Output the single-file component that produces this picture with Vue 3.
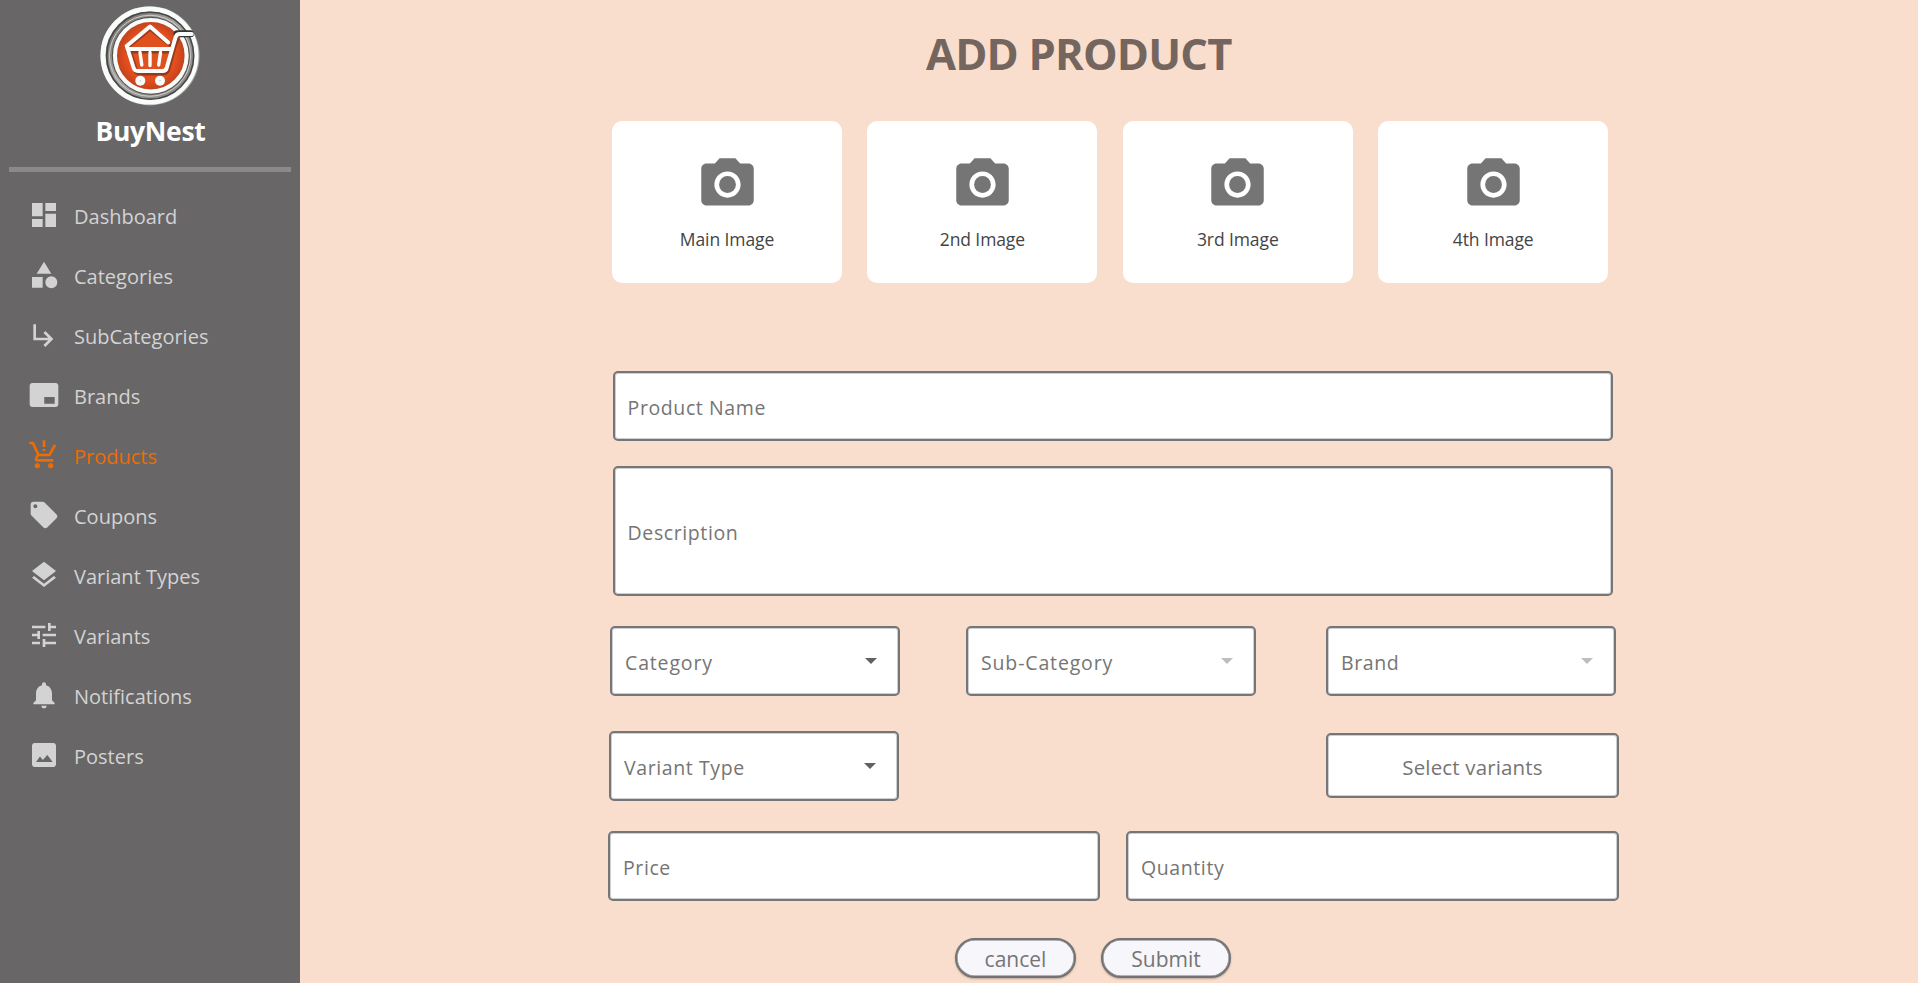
<script setup>
const nav = [
  { label: 'Dashboard', d: 'M3 13h8V3H3v10zm0 8h8v-6H3v6zm10 0h8V11h-8v10zm0-18v6h8V3h-8z' },
  { label: 'Categories', d: 'M12 2l-5.5 9h11zM17.5 13a4.5 4.5 0 1 0 0 9 4.5 4.5 0 1 0 0-9zM3 13.5h8v8H3z' },
  { label: 'SubCategories', d: 'M19 15l-6 6-1.42-1.42L15.17 16H4V4h2v10h9.17l-3.59-3.58L13 9l6 6z' },
  { label: 'Brands', d: 'M20.8 3H3.2C2.1 3 1.25 3.9 1.25 5v14c0 1.1 .9 2 1.95 2h17.6c1.05 0 1.95-.9 1.95-2V5c0-1.1-.9-2-1.95-2z M12.2 13.5h7.8v5h-7.8z' },
  { label: 'Products', active: true, d: 'M11 9h2V7.5h-2V9zm0-3h2V1h-2v5zM7 18c-1.1 0-1.99.9-1.99 2S5.9 22 7 22s2-.9 2-2-.9-2-2-2zm10 0c-1.1 0-1.99.9-1.99 2s.89 2 1.99 2 2-.9 2-2-.9-2-2-2zm-9.83-3.25l.03-.12.9-1.63h7.45c.75 0 1.41-.41 1.75-1.03l3.86-7.01L19.42 4h-.01l-1.1 2-2.76 5H8.53l-.13-.27L6.16 6l-.95-2-.94-2H1v2h2l3.6 7.59-1.35 2.45c-.16.28-.25.61-.25.96 0 1.1.9 2 2 2h12v-2H7.42c-.13 0-.25-.11-.25-.25z' },
  { label: 'Coupons', d: 'M21.41 11.58l-9-9C12.05 2.22 11.55 2 11 2H4c-1.1 0-2 .9-2 2v7c0 .55.22 1.05.59 1.42l9 9c.36.36.86.58 1.41.58s1.05-.22 1.41-.59l7-7c.37-.36.59-.86.59-1.41s-.23-1.06-.59-1.42zM5.5 7C4.67 7 4 6.33 4 5.5S4.67 4 5.5 4 7 4.67 7 5.5 6.33 7 5.5 7z' },
  { label: 'Variant Types', d: 'M11.99 18.54l-7.37-5.73L3 14.07l9 7 9-7-1.63-1.27-7.38 5.74zM12 16l7.36-5.73L21 9l-9-7-9 7 1.63 1.27L12 16z' },
  { label: 'Variants', d: 'M3 17v2h6v-2H3zM3 5v2h10V5H3zm10 16v-2h8v-2h-8v-2h-2v6h2zM7 9v2H3v2h4v2h2V9H7zm14 4v-2H11v2h10zm-6-4h2V7h4V5h-4V3h-2v6z' },
  { label: 'Notifications', d: 'M12 22c1.1 0 2-.9 2-2h-4c0 1.1.89 2 2 2zm6-6v-5c0-3.07-1.64-5.64-4.5-6.32V4c0-.83-.67-1.5-1.5-1.5s-1.5.67-1.5 1.5v.68C7.63 5.36 6 7.92 6 11v5l-2 2v1h16v-1l-2-2z' },
  { label: 'Posters', d: 'M21 19V5c0-1.1-.9-2-2-2H5c-1.1 0-2 .9-2 2v14c0 1.1.9 2 2 2h14c1.1 0 2-.9 2-2z M9 13.2l2.1 2.5L14.5 12l4 5.3H6z' },
]
const images = ['Main Image', '2nd Image', '3rd Image', '4th Image']
</script>

<template>
  <div class="page">
    <aside class="sidebar">
      <svg class="logo" viewBox="0 0 102 102">
        <defs>
          <radialGradient id="core"><stop offset="0" stop-color="#d9551f" /><stop offset=".7" stop-color="#e54d1d" /><stop offset="1" stop-color="#b9421c" /></radialGradient>
          <linearGradient id="ring" x2="1" y2="1"><stop offset="0" stop-color="#625f5c" /><stop offset=".45" stop-color="#a5a29f" /><stop offset="1" stop-color="#807d7a" /></linearGradient>
        </defs>
        <circle cx="51" cy="50.8" r="49.6" fill="#a6a5a6" />
        <circle cx="50.500" cy="50.500" r="46.500" fill="url(#ring)" stroke="#fafcfb" stroke-width="5" />
        <circle cx="51.200" cy="50.800" r="43.500" fill="none" stroke="#454744" stroke-width="1.600" />
        <circle cx="51" cy="50.800" r="40.500" fill="none" stroke="#cfcecc" stroke-width="1" />
        <circle cx="51.800" cy="50.800" r="38.500" fill="none" stroke="#504f4b" stroke-width="1" />
        <circle cx="51.800" cy="50.700" r="35.800" fill="url(#core)" stroke="#f8fbfa" stroke-width="4" />
        <g fill="none" stroke-linecap="round" stroke-linejoin="round">
          <path d="M78 28.800h13.500" stroke="#35332f" stroke-width="7" />
          <path d="M28 42L51 23l20 16M29 46h44M29 42l7 22q1 4 5 4h23q4 0 5-4l6-22 4-11" stroke="#6b2f1c" stroke-width="5" opacity=".65" />
          <path d="M27.700 41L51 21.500 69.300 37.500M29 44h43.500M27.700 41l7 22q1 3 4 3h25q3 0 4-3l6-21 3-10q1-3 4-3h12" stroke="#fbfdfc" stroke-width="4" />
          <path d="M41 47.500l1.800 12.500M51 47.500v13M61.500 47.500l-1.800 12.500" stroke="#fbfdfc" stroke-width="3.400" />
        </g>
        <circle cx="41.300" cy="75.700" r="5" fill="#fafcfb" /><circle cx="61" cy="75.700" r="5" fill="#fafcfb" />
        <circle cx="41.300" cy="75.700" r=".7" fill="#b9c5c8" /><circle cx="61" cy="75.700" r=".7" fill="#b9c5c8" />
      </svg>
      <div class="brand">BuyNest</div>
      <div class="rule"></div>
      <nav>
        <a v-for="n in nav" :key="n.label" :class="['item', { active: n.active }]">
          <svg viewBox="0 0 24 24"><path :d="n.d" fill-rule="evenodd" /></svg>
          <span>{{ n.label }}</span>
        </a>
      </nav>
    </aside>

    <main class="content">
      <h1>ADD PRODUCT</h1>
      <section class="cards">
        <div v-for="i in images" :key="i" class="card">
          <svg viewBox="0 0 24 24"><circle cx="12" cy="12" r="3.2" /><path d="M9 2L7.17 4H4c-1.1 0-2 .9-2 2v12c0 1.1.9 2 2 2h16c1.1 0 2-.9 2-2V6c0-1.1-.9-2-2-2h-3.17L15 2H9zm3 15c-2.76 0-5-2.24-5-5s2.24-5 5-5 5 2.24 5 5-2.24 5-5 5z" /></svg>
          <span>{{ i }}</span>
        </div>
      </section>

      <div class="field name"><span>Product Name</span></div>
      <div class="field description"><span>Description</span></div>
      <div class="row selects">
        <div class="field select"><span class="wide">Category</span><i class="arrow"></i></div>
        <div class="field select"><span class="wide">Sub-Category</span><i class="arrow off"></i></div>
        <div class="field select"><span>Brand</span><i class="arrow off"></i></div>
      </div>
      <div class="row variants">
        <div class="field select"><span>Variant Type</span><i class="arrow"></i></div>
        <div class="field pick"><span>Select variants</span></div>
      </div>
      <div class="row amounts">
        <div class="field"><span>Price</span></div>
        <div class="field"><span>Quantity</span></div>
      </div>
      <div class="row actions">
        <button class="cancel">cancel</button>
        <button class="submit">Submit</button>
      </div>
    </main>
  </div>
</template>

<style>
body { overflow: hidden; }
</style>

<style scoped>
* { box-sizing: border-box; }
.page { display: flex; width: 1918px; height: 983px; background: #f9decd; font-family: "Open Sans", "Noto Sans", sans-serif; overflow: hidden; }
.sidebar { width: 300px; flex: none; background: #686667; display: flex; flex-direction: column; align-items: center; }
.logo { width: 102px; height: 102px; margin-top: 5px; flex: none; }
.brand { margin-top: 6px; height: 36px; line-height: 36px; font-size: 26.5px; font-weight: 700; color: #fff; letter-spacing: -.3px; padding-left: 1px; }
.rule { width: 282px; height: 5px; margin-top: 18px; background: #8a8a8a; }
nav { width: 100%; margin-top: 13px; }
.item { display: flex; align-items: center; height: 60px; padding-left: 28px; color: #d3d3d3; font-size: 20px; }
.item svg { width: 32px; height: 32px; fill: currentColor; margin-right: 14px; }
.item span { line-height: 28px; padding-top: 4px; }
.item.active { color: #ee6c02; }
.content { flex: 1; padding-left: 308px; }
h1 { margin: 24px 0 0 318px; height: 60px; line-height: 60px; font-size: 43.5px; font-weight: 700; color: #74665e; white-space: nowrap; letter-spacing: -.8px; }
.cards { display: flex; gap: 25.4px; margin: 36.7px 0 0 4px; }
.card { width: 230px; height: 162.5px; border-radius: 10px; background: #fff; display: flex; flex-direction: column; align-items: center; padding-top: 32.6px; }
.card svg { width: 63px; height: 63px; fill: #757575; }
.card span { margin-top: 10px; font-size: 17.5px; line-height: 26px; color: #444; letter-spacing: -.1px; }
.field { height: 70px; background: #fff; border: 2px solid #757678; border-radius: 5px; box-shadow: inset 0 0 0 1px rgba(117,118,120,.35); display: flex; align-items: center; padding-left: 13px; color: #757575; font-size: 19.5px; letter-spacing: .6px; }
.field span { line-height: 28px; padding-top: 4px; }
.field .wide { letter-spacing: .85px; }
.name { width: 1000px; margin: 87.8px 0 0 4.6px; }
.description { width: 1000px; height: 130px; margin: 25px 0 0 4.6px; }
.row { display: flex; }
.selects { margin: 30px 0 0 2px; gap: 66px; }
.selects .field:last-child { margin-left: 4px; }
.select { width: 290px; justify-content: space-between; padding-right: 21.5px; }
.arrow { width: 0; height: 0; border: 6.5px solid transparent; border-top: 6.5px solid #616161; border-bottom: 0; }
.arrow.off { border-top-color: #bdbdbd; }
.variants { margin: 35px 0 0 1px; gap: 427px; align-items: flex-start; }
.pick { width: 293px; height: 65px; margin-top: 2px; justify-content: center; padding-left: 0; font-size: 20.5px; letter-spacing: .15px; }
.pick span { padding-top: 3px; }
.amounts { margin-top: 30px; gap: 26px; }
.amounts .field { width: 492px; }
.amounts .field + .field { width: 493px; }
.actions { margin: 37px 0 0 347px; gap: 25px; }
button { height: 40px; padding: 2px 0 0; background: #f7f6fb; border: 2px solid #737373; border-radius: 20px; font-family: inherit; font-size: 21px; line-height: 34px; color: #757575; box-shadow: 0 1px 2px rgba(0,0,0,.25), inset 0 0 0 .5px #737373; }
.cancel { width: 121px; }
.submit { width: 130px; }
</style>
